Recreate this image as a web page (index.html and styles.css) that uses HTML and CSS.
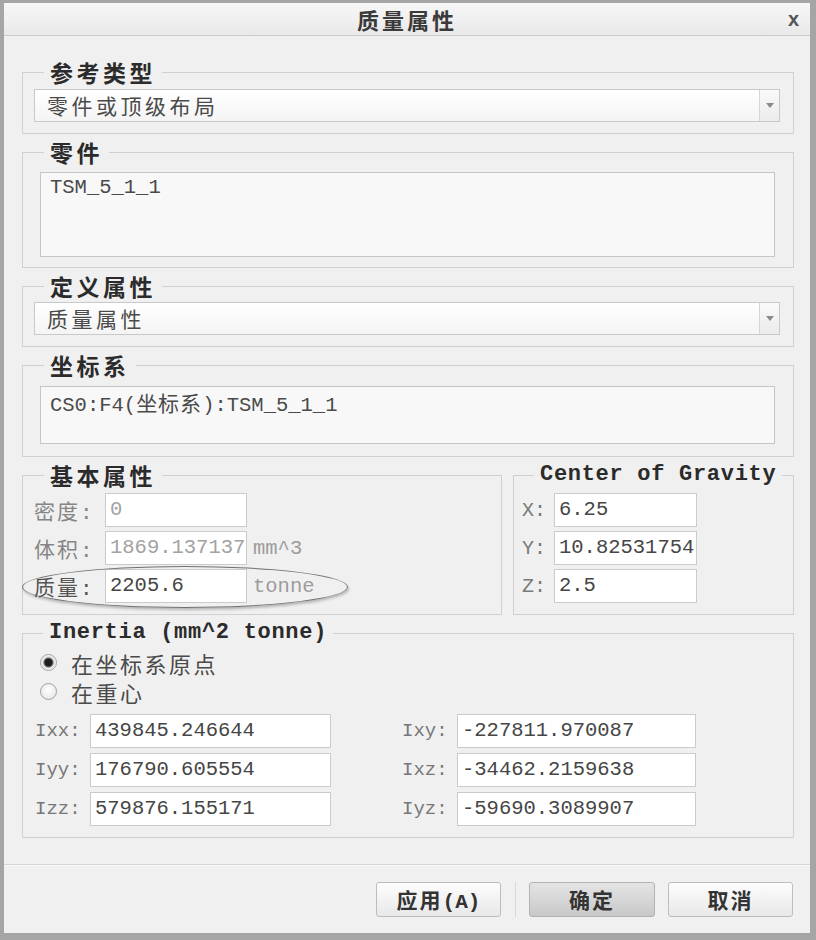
FILE: index.html
```html
<!DOCTYPE html>
<html lang="zh-CN">
<head>
    <meta charset="UTF-8">
    <title>质量属性</title>
    <link rel="stylesheet" href="styles.css">
</head>
<body>
    <div class="dialog">
        <div class="titlebar">
            <div class="title">质量属性</div>
            <div class="close">x</div>
        </div>

        <div class="content">
            <fieldset class="group">
                <legend>参考类型</legend>
                <div class="group-body combo-body">
                    <div class="combo">
                        <div class="combo-text">零件或顶级布局</div>
                        <div class="combo-arrow"></div>
                    </div>
                </div>
            </fieldset>

            <fieldset class="group">
                <legend>零件</legend>
                <div class="group-body memo-body">
                    <div class="memo part">TSM_5_1_1</div>
                </div>
            </fieldset>

            <fieldset class="group">
                <legend>定义属性</legend>
                <div class="group-body combo-body2">
                    <div class="combo">
                        <div class="combo-text">质量属性</div>
                        <div class="combo-arrow"></div>
                    </div>
                </div>
            </fieldset>

            <fieldset class="group">
                <legend>坐标系</legend>
                <div class="group-body memo-body2">
                    <div class="memo csys">CS0:F4(<span class="cjk">坐标系</span>):TSM_5_1_1</div>
                </div>
            </fieldset>

            <div class="split">
                <fieldset class="group basic">
                    <legend>基本属性</legend>
                    <div class="group-body props">
                        <div class="prop">
                            <span class="prop-label dim">密度:</span>
                            <span class="field off">0</span>
                        </div>
                        <div class="prop">
                            <span class="prop-label dim">体积:</span>
                            <span class="field off">1869.137137</span>
                            <span class="unit">mm^3</span>
                        </div>
                        <div class="prop">
                            <span class="prop-label">质量:</span>
                            <span class="field">2205.6</span>
                            <span class="unit">tonne</span>
                            <span class="mark"></span>
                        </div>
                    </div>
                </fieldset>

                <fieldset class="group cog">
                    <legend class="mono-legend">Center of Gravity</legend>
                    <div class="group-body props cog-props">
                        <div class="prop">
                            <span class="axis">X:</span>
                            <span class="field">6.25</span>
                        </div>
                        <div class="prop">
                            <span class="axis">Y:</span>
                            <span class="field">10.82531754</span>
                        </div>
                        <div class="prop">
                            <span class="axis">Z:</span>
                            <span class="field">2.5</span>
                        </div>
                    </div>
                </fieldset>
            </div>

            <fieldset class="group">
                <legend class="mono-legend">Inertia (mm^2 tonne)</legend>
                <div class="group-body inertia">
                    <div class="radio-row">
                        <span class="radio on"></span>
                        <span>在坐标系原点</span>
                    </div>
                    <div class="radio-row">
                        <span class="radio"></span>
                        <span>在重心</span>
                    </div>
                    <div class="moments">
                        <div class="moment"><span class="name">Ixx:</span><span class="field">439845.246644</span></div>
                        <div class="moment"><span class="name">Ixy:</span><span class="field">-227811.970087</span></div>
                        <div class="moment"><span class="name">Iyy:</span><span class="field">176790.605554</span></div>
                        <div class="moment"><span class="name">Ixz:</span><span class="field">-34462.2159638</span></div>
                        <div class="moment"><span class="name">Izz:</span><span class="field">579876.155171</span></div>
                        <div class="moment"><span class="name">Iyz:</span><span class="field">-59690.3089907</span></div>
                    </div>
                </div>
            </fieldset>
        </div>

        <div class="footer">
            <div class="btn apply"><span>应用<span class="mono">(A)</span></span></div>
            <div class="btn-sep"></div>
            <div class="btn default">确定</div>
            <div class="btn">取消</div>
        </div>
    </div>
</body>
</html>
```

FILE: styles.css
```css
* {
    box-sizing: border-box;
}

html,
body {
    margin: 0;
}

body {
    background: #f0f0f0;
    font-family: "Noto Sans CJK SC", sans-serif;
    color: #444;
}

.dialog {
    width: 816px;
    height: 940px;
    display: flex;
    flex-direction: column;
    background: #f0f0f0;
    border-style: solid;
    border-color: #a5a5a5;
    border-width: 3px 6px 7px 4px;
}

/* title bar */
.titlebar {
    height: 33px;
    display: grid;
    grid-template-columns: 1fr auto 1fr;
    align-items: center;
    background: linear-gradient(#f7f7f7, #e9e9e9);
    border-bottom: 1px solid #c9c9c9;
}

.title {
    grid-column: 2;
    font-size: 22px;
    font-weight: 700;
    letter-spacing: 3px;
    line-height: 1;
    color: #3a3a3a;
}

.close {
    grid-column: 3;
    justify-self: end;
    margin-right: 11px;
    font-family: "Liberation Sans", sans-serif;
    font-size: 20px;
    font-weight: 700;
    color: #555;
}

/* groups */
.content {
    display: flex;
    flex-direction: column;
    gap: 6px;
    padding: 24px 16px 0 18px;
}

.group {
    margin: 0;
    padding: 0;
    min-width: 0;
    border: 1px solid #d0d0d0;
}

.group legend {
    margin-left: 21px;
    padding: 0 6px;
    font-size: 23px;
    font-weight: 700;
    line-height: 24px;
    letter-spacing: 3.5px;
    color: #2b2b2b;
}

.group legend.mono-legend {
    margin-left: 20px;
    font-family: "Liberation Mono", monospace;
    font-size: 22px;
    letter-spacing: 0.7px;
}

.combo-body {
    padding: 5px 13px 11px 11px;
}

.combo-body2 {
    padding: 4px 13px 11px 11px;
}

.combo {
    display: flex;
    height: 33px;
    border: 1px solid #c9c9c9;
    background: linear-gradient(#fff, #f4f4f4);
}

.combo-text {
    flex: 1;
    padding-left: 12px;
    font-size: 21px;
    line-height: 31px;
    letter-spacing: 3.5px;
    color: #4a4a4a;
}

.combo-arrow {
    width: 20px;
    display: flex;
    align-items: center;
    justify-content: center;
    border-left: 1px solid #d6d6d6;
    background: linear-gradient(#fafafa, #ebebeb);
}

.combo-arrow::after {
    content: "";
    border-left: 4px solid transparent;
    border-right: 4px solid transparent;
    border-top: 5px solid #8a8a8a;
}

.memo-body {
    padding: 8px 18px 10px 17px;
}

.memo-body2 {
    padding: 9px 18px 12px 17px;
}

.memo {
    border: 1px solid #c6c6c6;
    background: #f8f8f8;
    padding: 3px 9px;
    font-family: "Liberation Mono", "Noto Sans CJK SC", monospace;
    font-size: 20.5px;
    line-height: 24px;
    color: #4a4a4a;
}

.memo.part {
    height: 85px;
}

.memo.csys {
    height: 58px;
}

.cjk {
    font-family: "Noto Sans CJK SC", sans-serif;
    font-size: 21px;
    letter-spacing: 1px;
}

/* basic props + center of gravity */
.split {
    display: flex;
    gap: 11px;
}

.basic {
    flex: 0 0 480px;
}

.cog {
    flex: 1;
}

.props {
    display: flex;
    flex-direction: column;
    gap: 4px;
    padding: 6px 0 11px 11px;
}

.cog-props {
    padding-left: 8px;
}

.prop {
    position: relative;
    display: flex;
    align-items: center;
    height: 34px;
}

.prop-label {
    width: 71px;
    font-family: "Liberation Mono", "Noto Sans CJK SC", monospace;
    font-size: 21px;
    letter-spacing: 2px;
    color: #555;
}

.prop-label.dim {
    color: #858585;
}

.axis {
    width: 32px;
    font-family: "Liberation Mono", monospace;
    font-size: 20px;
    color: #7a7a7a;
}

.field {
    width: 142px;
    height: 34px;
    padding-left: 4px;
    overflow: hidden;
    white-space: nowrap;
    border: 1px solid #cbcbcb;
    background: #fff;
    font-family: "Liberation Mono", monospace;
    font-size: 20.5px;
    line-height: 32px;
    color: #464646;
}

.cog .field {
    width: 143px;
}

.field.off {
    color: #a2a2a2;
}

.unit {
    margin-left: 6px;
    font-family: "Liberation Mono", monospace;
    font-size: 20.5px;
    color: #9c9c9c;
}

/* hand-drawn ellipse around the mass row */
.mark {
    position: absolute;
    left: -12px;
    top: -3px;
    width: 326px;
    height: 42px;
    border: 1.5px solid #707070;
    border-radius: 50%;
    box-shadow: 1px 2px 3px rgba(0, 0, 0, 0.25);
    pointer-events: none;
}

/* inertia */
.inertia {
    padding: 3px 0 11px 12px;
}

.radio-row {
    display: flex;
    align-items: center;
    gap: 14px;
    height: 29px;
    margin-left: 5px;
    font-size: 22px;
    letter-spacing: 2.5px;
    color: #4a4a4a;
}

.radio {
    width: 17px;
    height: 17px;
    border-radius: 50%;
    border: 1px solid #a0a0a0;
    background: radial-gradient(circle at 50% 40%, #fff, #e2e2e2);
}

.radio.on {
    background: radial-gradient(circle, #1e1e1e 0 3.5px, #777 4.5px, #dcdcdc 5.5px, #fff 8px);
}

.moments {
    display: grid;
    grid-template-columns: 296px 296px;
    column-gap: 71px;
    row-gap: 5px;
    margin-top: 8px;
}

.moment {
    display: flex;
    align-items: center;
}

.moment .name {
    width: 55px;
    font-family: "Liberation Mono", monospace;
    font-size: 19px;
    color: #777;
}

.moment .field {
    width: 241px;
}

.moment:nth-child(2n) .field {
    width: 239px;
}

/* footer buttons */
.footer {
    display: flex;
    justify-content: flex-end;
    align-items: center;
    margin-top: 26px;
    padding: 17px 17px 0 0;
    border-top: 1px solid #d4d4d4;
    box-shadow: inset 0 1px 0 #fafafa;
}

.btn {
    width: 125px;
    height: 35px;
    border: 1px solid #bdbdbd;
    border-radius: 3px;
    background: linear-gradient(#fdfdfd, #e8e8e8);
    text-align: center;
    font-size: 21px;
    font-weight: 700;
    line-height: 33px;
    letter-spacing: 2px;
    color: #333;
}

.btn.default {
    width: 126px;
    margin-right: 13px;
    border-color: #b3b3b3;
    background: linear-gradient(#e4e4e4, #c8c8c8);
}

.btn .mono {
    font-family: "Liberation Mono", monospace;
    font-size: 21px;
    letter-spacing: 0;
}

.btn-sep {
    width: 1px;
    height: 35px;
    margin: 0 13px 0 14px;
    background: #d8d8d8;
}
```
